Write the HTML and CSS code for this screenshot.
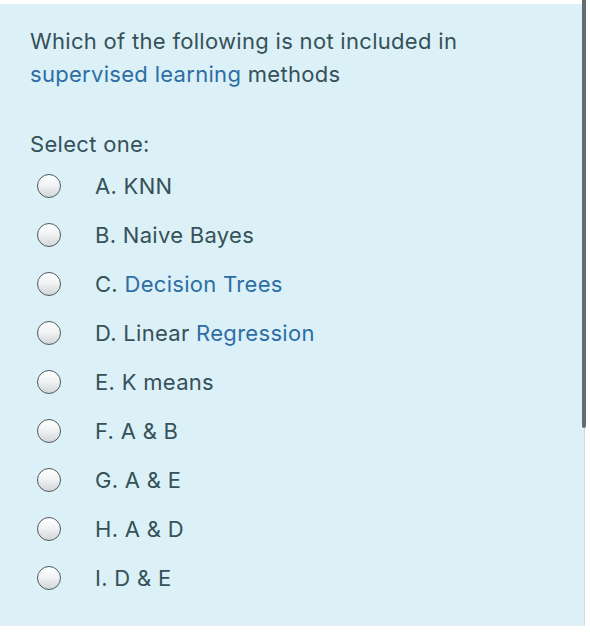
FILE: index.html
```html
<!DOCTYPE html>
<html>
<head>
<meta charset="utf-8">
<link rel="stylesheet" href="styles.css">
</head>
<body>
<div class="page">
  <div class="que">
    <div class="qtext">
      <p>Which of the following is not included in <span class="lnk">supervised learning</span> methods</p>
    </div>
    <div class="prompt">Select one:</div>
    <div class="answers">
      <label class="opt"><span class="radio"></span><span class="lbl">A. KNN</span></label>
      <label class="opt"><span class="radio"></span><span class="lbl">B. Naive Bayes</span></label>
      <label class="opt"><span class="radio"></span><span class="lbl">C. <span class="lnk">Decision Trees</span></span></label>
      <label class="opt"><span class="radio"></span><span class="lbl">D. Linear <span class="lnk">Regression</span></span></label>
      <label class="opt"><span class="radio"></span><span class="lbl">E. K means</span></label>
      <label class="opt"><span class="radio"></span><span class="lbl">F. A &amp; B</span></label>
      <label class="opt"><span class="radio"></span><span class="lbl">G. A &amp; E</span></label>
      <label class="opt"><span class="radio"></span><span class="lbl">H. A &amp; D</span></label>
      <label class="opt"><span class="radio"></span><span class="lbl">I. D &amp; E</span></label>
    </div>
  </div>
  <div class="scrollthumb"></div>
</div>
</body>
</html>
```
FILE: styles.css
```css
html, body {
  margin: 0;
  padding: 0;
  background: #ffffff;
}
body {
  font-family: "Inter", "Liberation Sans", sans-serif;
  font-size: 22px;
  letter-spacing: 0.3px;
  color: #355159;
}
.page {
  position: relative;
  width: 590px;
  height: 640px;
  padding-top: 4px;
  box-sizing: border-box;
}
.que {
  width: 585px;
  box-sizing: border-box;
  background: #dcf0f7;
  border-right: 1px solid #cfdde2;
  border-bottom: 1px solid #e6eef1;
  padding: 21px 0 23px 30px;
}
.qtext p {
  margin: 0;
  width: 450px;
  line-height: 33px;
}
.lnk {
  color: #2c6ea4;
}
.prompt {
  margin-top: 37px;
  line-height: 33px;
}
.answers {
  display: flex;
  flex-direction: column;
}
.opt {
  display: flex;
  align-items: center;
  height: 49px;
  padding-left: 7px;
}
.radio {
  width: 24px;
  height: 24px;
  box-sizing: border-box;
  border-radius: 50%;
  border: 1.6px solid #4e5a5e;
  background: linear-gradient(180deg, #ffffff 0%, #f1f3f4 45%, #d2d6d8 100%);
  flex: none;
}
.lbl {
  margin-left: 34px;
}
.scrollthumb {
  position: absolute;
  top: 0;
  left: 582px;
  width: 4px;
  height: 428px;
  background: #666b6d;
  border-radius: 0 0 2px 2px;
}
```
